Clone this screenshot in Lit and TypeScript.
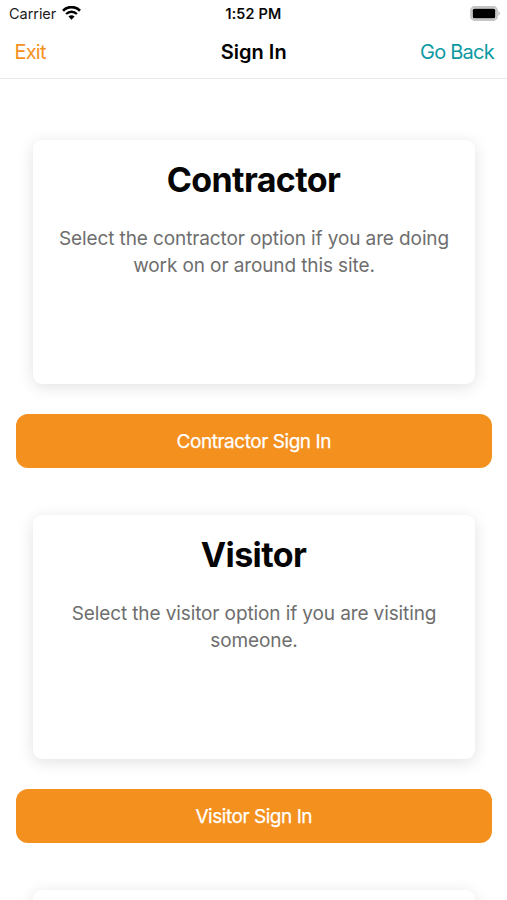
import { LitElement, html, css } from "lit";
import { customElement, property } from "lit/decorators.js";

interface Option {
  title: string;
  lines: string[];
}

const options: Option[] = [
  { title: "Contractor", lines: ["Select the contractor option if you are doing", "work on or around this site."] },
  { title: "Visitor", lines: ["Select the visitor option if you are visiting", "someone."] },
];

@customElement("option-card")
class OptionCard extends LitElement {
  @property() heading = "";
  @property({ type: Array }) lines: string[] = [];

  static styles = css`
    :host { display: block; }
    .card { box-sizing: border-box; height: 244.5px; margin: 0 32px 0 33px; padding-top: 19px; border-radius: 9px; background: #fff; box-shadow: 0 3px 16px rgba(0, 0, 0, .12); text-align: center; }
    .title { margin: 0 1px 0 0; font-size: 34px; line-height: 42px; font-weight: 700; letter-spacing: -.62px; color: #050505; }
    .copy { margin: 24px 0 0; font-size: 19px; line-height: 27px; letter-spacing: -.11px; color: #6e6e6e; }
    .line { display: block; white-space: nowrap; }
    .button { display: block; box-sizing: border-box; width: 476.5px; height: 54.5px; margin: 29.5px 0 0 15.5px; padding: 0; border: 0; border-radius: 12px; background: #f4901e; color: #fff; font: 400 19px/55px Inter, sans-serif; letter-spacing: -.46px; -webkit-text-stroke: .25px #fff; text-align: center; }
  `;

  render() {
    return html`
      <section class="card">
        <h1 class="title">${this.heading}</h1>
        <p class="copy">${this.lines.map((l) => html`<span class="line">${l}</span>`)}</p>
      </section>
      <button class="button">${this.heading} Sign In</button>`;
  }
}

@customElement("app-root")
class AppRoot extends LitElement {
  static styles = css`
    :host { display: block; height: 900px; overflow: hidden; background: #fff; font-family: Inter, sans-serif; color: #000; }
    .status { display: grid; grid-template-columns: 1fr auto 1fr; align-items: center; height: 27px; padding: 0 6px 0 9px; font-size: 14.5px; }
    .carrier { display: flex; align-items: center; gap: 5.5px; color: #1c1c1c; letter-spacing: -.05px; }
    .wifi { display: block; margin-top: -1px; }
    .time { font-weight: 500; letter-spacing: .15px; margin-right: 3px; -webkit-text-stroke: .2px #000; }
    .battery { justify-self: end; display: block; margin-top: -1px; }
    .nav { box-sizing: border-box; display: grid; grid-template-columns: 1fr auto 1fr; align-items: center; height: 52px; padding: 0 13px 0 14.5px; border-bottom: 1px solid #e9e9e9; font-size: 20px; line-height: 23px; }
    .exit { color: #f5921e; letter-spacing: -.8px; }
    .heading { font-weight: 600; margin-right: 1px; }
    .back { color: #0d9aa3; justify-self: end; letter-spacing: -.75px; }
    .list { display: flex; flex-direction: column; gap: 46.5px; padding-top: 60.5px; }
    .peek { height: 245px; margin: 0 32px 0 33px; border-radius: 9px; box-shadow: 0 3px 16px rgba(0, 0, 0, .12); }
  `;

  render() {
    return html`
      <div class="status">
        <span class="carrier">Carrier
          <svg class="wifi" width="19" height="14" viewBox="0 0 19 14">
            <path d="M1 4.700C5.800-.1 13.200-.1 18 4.700" fill="none" stroke="#000" stroke-width="2.700" />
            <path d="M4.100 8C7.200 5 11.800 5 14.900 8" fill="none" stroke="#000" stroke-width="2.400" />
            <path d="M6.400 10.400Q9.500 7.900 12.600 10.400L9.500 13.700Z" />
          </svg>
        </span>
        <span class="time">1:52 PM</span>
        <svg class="battery" width="31" height="15" viewBox="0 0 31 15">
          <rect x="1" y="1" width="26" height="13" rx="3.500" fill="#ddd" stroke="#c4c4c4" stroke-width="1.800" />
          <rect x="2.800" y="2.800" width="22.400" height="9.400" rx="1.500" />
          <path d="M28.500 5Q31 7.500 28.500 10Z" fill="#aaa" />
        </svg>
      </div>
      <nav class="nav"><span class="exit">Exit</span><span class="heading">Sign In</span><span class="back">Go Back</span></nav>
      <main class="list">
        ${options.map((o) => html`<option-card .heading=${o.title} .lines=${o.lines}></option-card>`)}
        <section class="peek"></section>
      </main>`;
  }
}
